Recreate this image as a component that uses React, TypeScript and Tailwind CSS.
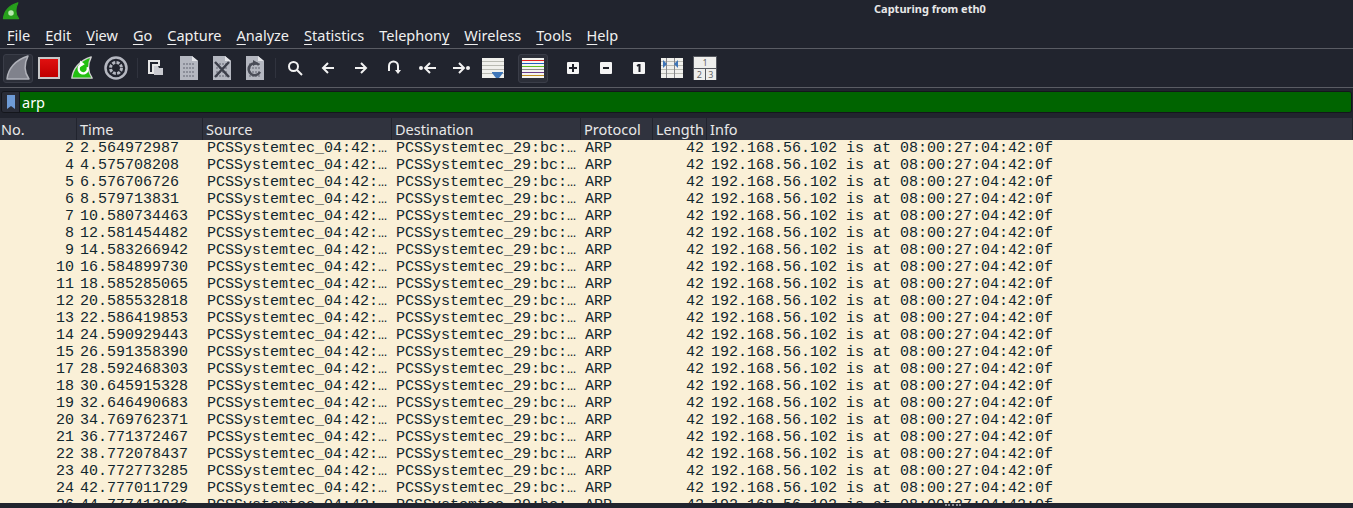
import React from 'react';

const menus: [string, string, string][] = [
  ['', 'F', 'ile'],
  ['', 'E', 'dit'],
  ['', 'V', 'iew'],
  ['', 'G', 'o'],
  ['', 'C', 'apture'],
  ['', 'A', 'nalyze'],
  ['', 'S', 'tatistics'],
  ['Telephon', 'y', ''],
  ['', 'W', 'ireless'],
  ['', 'T', 'ools'],
  ['', 'H', 'elp'],
];

const packets: [number, string][] = [
  [2, '2.564972987'],
  [4, '4.575708208'],
  [5, '6.576706726'],
  [6, '8.579713831'],
  [7, '10.580734463'],
  [8, '12.581454482'],
  [9, '14.583266942'],
  [10, '16.584899730'],
  [11, '18.585285065'],
  [12, '20.585532818'],
  [13, '22.586419853'],
  [14, '24.590929443'],
  [15, '26.591358390'],
  [17, '28.592468303'],
  [18, '30.645915328'],
  [19, '32.646490683'],
  [20, '34.769762371'],
  [21, '36.771372467'],
  [22, '38.772078437'],
  [23, '40.772773285'],
  [24, '42.777011729'],
  [26, '44.777413936'],
];

const columns = ['No.', 'Time', 'Source', 'Destination', 'Protocol', 'Length', 'Info'];

function Fin({ fill, stroke }: { fill: string; stroke: string }) {
  return <path d="M2 24 C3 14 10 5 23 1 C19 9 19 17 24 24 Z" fill={fill} stroke={stroke} strokeWidth="1.5" strokeLinejoin="round" />;
}

function Page({ children }: { children?: React.ReactNode }) {
  return (
    <svg width="20" height="26" viewBox="0 0 20 26">
      <path d="M1 1 H13 L19 6 V25 H1 Z" fill="#b4b7c0" />
      <path d="M13 1 L19 6 H13 Z" fill="#e3e4e8" />
      <path d="M4 9 H16 M4 13 H16 M4 17 H16 M4 21 H16" stroke="#8b8e99" strokeWidth="2" strokeDasharray="2 1" />
      {children}
    </svg>
  );
}

function Arrow({ dir }: { dir: 'left' | 'right' }) {
  return (
    <svg width="14" height="14" viewBox="0 0 14 14" fill="none" stroke="#f2f2f2" strokeWidth="2">
      {dir === 'left' ? <path d="M13 7 H2 M7 2 L2 7 L7 12" /> : <path d="M1 7 H12 M7 2 L12 7 L7 12" />}
    </svg>
  );
}

function Lines({ children }: { children?: React.ReactNode }) {
  return (
    <svg width="22" height="20" viewBox="0 0 22 20">
      <rect width="22" height="20" fill="#f0f0ec" />
      <path d="M0 3.5 H22 M0 7.5 H22 M0 11.5 H22 M0 15.5 H22" stroke="#b9bab2" strokeWidth="1" />
      {children}
    </svg>
  );
}

function Zoom({ sign }: { sign: string }) {
  return (
    <div className="w-3 h-3 bg-[#f4f4f4] rounded-[1px] flex items-center justify-center">
      <svg width="8" height="8" viewBox="0 0 8 8" stroke="#1d1f27" strokeWidth="2" fill="none">
        {sign === '+' && <path d="M0 4 H8 M4 0 V8" />}
        {sign === '-' && <path d="M1 4 H7" />}
        {sign === '1' && <path d="M2 2 L4.5 0.5 V8" />}
      </svg>
    </div>
  );
}

function Sep() {
  return <div className="w-px h-5 bg-[#30333e]" />;
}

export default function App() {
  return (
    <div className="h-[508px] w-[1353px] overflow-hidden bg-[#21242e] flex flex-col font-['Noto_Sans',sans-serif] text-[#f0f0f0]">
      {/* Title bar */}
      <div className="h-[24px] shrink-0 relative flex items-start pt-[2px] pl-[2px]">
        <svg width="18" height="18" viewBox="0 0 26 26">
          <Fin fill="#27a01c" stroke="#27a01c" />
          <circle cx="13" cy="16" r="4" fill="#b8e8b0" />
        </svg>
        <span className="absolute left-[874px] top-[1px] text-[11px] font-bold text-[#e8e8e8]">Capturing from eth0</span>
      </div>

      {/* Menu */}
      <div className="h-[25px] shrink-0 flex items-center pl-[7px] gap-[15px] text-[14.5px] border-b border-[#5a5c64]">
        {menus.map(([before, key, after]) => (
          <span key={before + key + after}>
            {before}
            <u className="underline-offset-[3px]">{key}</u>
            {after}
          </span>
        ))}
      </div>

      {/* Toolbar */}
      <div className="h-[39px] shrink-0 flex items-center pl-[2px] border-b border-[#5a5c64]">
        <div className="w-[30px] h-[29px] ml-[1px] flex items-center justify-center rounded-[3px] bg-[#2c2f39] border border-[#3a3d48]">
          <svg width="26" height="26" viewBox="0 0 26 26">
            <Fin fill="#80828c" stroke="#b0b2ba" />
          </svg>
        </div>
        <div className="ml-[5px] w-[22px] h-[22px] border-2 border-[#c8c8c8] bg-gradient-to-b from-[#e01010] to-[#c00000]" />
        <svg className="ml-[10px]" width="24" height="26" viewBox="0 0 26 26">
          <Fin fill="#22c010" stroke="#d0d0d0" />
          <path d="M19 12 A5 5 0 1 1 13 9" fill="none" stroke="#fff" strokeWidth="2.5" />
          <path d="M11 5 L16 9 L11 12 Z" fill="#fff" />
        </svg>
        <svg className="ml-[10px]" width="24" height="24" viewBox="0 0 24 24" fill="none">
          <circle cx="12" cy="12" r="10.5" stroke="#b4b7c0" strokeWidth="2.5" />
          <circle cx="12" cy="12" r="5.5" stroke="#b4b7c0" strokeWidth="3" strokeDasharray="3 1.3" />
        </svg>
        <div className="ml-[9px] mr-[10px]">
          <Sep />
        </div>
        <svg width="16" height="16" viewBox="0 0 16 16">
          <path d="M1 1 H11 V5 H5 V13 H1 Z" fill="none" stroke="#e6e6e6" strokeWidth="2" />
          <path d="M6 6 H10 L11 8 H15 V15 H6 Z" fill="#c9cad0" />
        </svg>
        <div className="ml-[15px]">
          <Page />
        </div>
        <div className="ml-[13px]">
          <Page>
            <path d="M3 7 L17 22 M17 7 L3 22" stroke="#3c3f4a" strokeWidth="2.5" />
          </Page>
        </div>
        <div className="ml-[13px]">
          <Page>
            <path d="M14 10 A6 6 0 1 0 15 17" fill="none" stroke="#4a4d58" strokeWidth="2.5" />
            <path d="M8 5 L13 8 L8 11 Z" fill="#4a4d58" />
          </Page>
        </div>
        <div className="ml-[10px] mr-[11px]">
          <Sep />
        </div>
        <svg width="16" height="16" viewBox="0 0 16 16" fill="none" stroke="#f2f2f2" strokeWidth="2">
          <circle cx="6.5" cy="6.5" r="4.5" />
          <path d="M10 10 L15 15" />
        </svg>
        <div className="ml-[18px]">
          <Arrow dir="left" />
        </div>
        <div className="ml-[19px]">
          <Arrow dir="right" />
        </div>
        <svg className="ml-[19px]" width="14" height="16" viewBox="0 0 14 16" fill="none">
          <path d="M2 11 V6 A4.5 4.5 0 0 1 11 6 V10" stroke="#f2f2f2" strokeWidth="2" />
          <path d="M8 10 H14 L11 14 Z" fill="#f2f2f2" />
        </svg>
        <svg className="ml-[18px]" width="18" height="14" viewBox="0 0 18 14" fill="none">
          <circle cx="2" cy="7" r="2" fill="#f2f2f2" />
          <path d="M17 7 H6 M11 2 L6 7 L11 12" stroke="#f2f2f2" strokeWidth="2" />
        </svg>
        <svg className="ml-[15px]" width="18" height="14" viewBox="0 0 18 14" fill="none">
          <circle cx="16" cy="7" r="2" fill="#f2f2f2" />
          <path d="M1 7 H12 M7 2 L12 7 L7 12" stroke="#f2f2f2" strokeWidth="2" />
        </svg>
        <div className="ml-[12px]">
          <Lines>
            <path d="M10 14 H21 V15 L17 20 H14 L10 15 Z" fill="#3f76b8" />
          </Lines>
        </div>
        <div className="ml-[14px] w-[30px] h-[29px] flex items-center justify-center rounded-[3px] bg-[#2c2f39] border border-[#3a3d48]">
          <svg width="22" height="20" viewBox="0 0 22 20">
            <rect width="22" height="20" fill="#f4f4f0" />
            <path d="M0 2.5 H22" stroke="#e02020" />
            <path d="M0 5.5 H22" stroke="#2060c0" />
            <path d="M0 8.5 H22" stroke="#60c020" />
            <path d="M0 11.5 H22" stroke="#8a8a8a" />
            <path d="M0 14.5 H22" stroke="#6a3c8a" />
            <path d="M0 17.5 H22" stroke="#c09020" />
          </svg>
        </div>
        <div className="ml-[19px]">
          <Zoom sign="+" />
        </div>
        <div className="ml-[21px]">
          <Zoom sign="-" />
        </div>
        <div className="ml-[21px]">
          <Zoom sign="1" />
        </div>
        <div className="ml-[16px]">
          <Lines>
            <path d="M5.5 0 V20 M13.5 0 V20" stroke="#85868a" strokeWidth="1" />
            <path d="M2 2 L6 6 L2 10 Z M17 2 L13 6 L17 10 Z" fill="#3f76b8" />
          </Lines>
        </div>
        <div className="ml-[10px] w-[24px] h-[24px] border border-[#55585f] bg-[#55585f] grid grid-cols-2 gap-[1px] text-[9px] leading-[11px] text-[#666] font-['Noto_Sans',sans-serif]">
          <div className="col-span-2 bg-[#eeeeec] text-center">1</div>
          <div className="bg-[#eeeeec] text-center">2</div>
          <div className="bg-[#eeeeec] text-center">3</div>
        </div>
      </div>

      {/* Display filter */}
      <div className="mt-[3px] mx-[1px] h-[22px] flex rounded-[3px] border border-[#14161c] overflow-hidden shrink-0">
        <div className="w-[18px] bg-[#2a2d38] flex items-center justify-center border-r border-[#14161c]">
          <svg width="8" height="14" viewBox="0 0 8 14">
            <path d="M0 0 H8 V14 L4 11 L0 14 Z" fill="#6e9bd6" />
          </svg>
        </div>
        <div className="flex-1 bg-[#006400] pl-[2px] text-[14.5px] leading-[20px] text-white">arp</div>
      </div>

      {/* Packet list header */}
      <div className="mt-[5px] h-[22px] shrink-0 grid grid-cols-[77px_126px_189px_189px_72px_54px_1fr] bg-[#30333e] text-[14.5px] leading-[22px] text-[#e8e8e8]">
        {columns.map((c, i) => (
          <div key={c} className={i === 0 ? 'pl-[1px] border-r border-[#21242e]' : 'pl-[3px] border-r border-[#21242e] whitespace-nowrap overflow-hidden'}>
            {c}
          </div>
        ))}
      </div>

      {/* Packets */}
      <div className="flex-1 min-h-0 overflow-hidden bg-[#faf0d7] text-[#12272e] font-['Liberation_Mono',monospace] text-[15px] leading-[17px]">
        {packets.map(([no, time]) => (
          <div key={no} className="h-[17px] grid grid-cols-[77px_126px_189px_189px_72px_54px_1fr] whitespace-pre">
            <div className="text-right pr-[3px]">{no}</div>
            <div className="pl-[3px]">{time}</div>
            <div className="pl-[4px]">PCSSystemtec_04:42:…</div>
            <div className="pl-[4px]">PCSSystemtec_29:bc:…</div>
            <div className="pl-[4px]">ARP</div>
            <div className="text-right pr-[3px]">42</div>
            <div className="pl-[4px]">192.168.56.102 is at 08:00:27:04:42:0f</div>
          </div>
        ))}
      </div>

      {/* Splitter */}
      <div className="h-[5px] shrink-0 flex items-center pl-[945px]">
        <div className="w-[16px] h-[2px] border-t-2 border-dotted border-[#8a8c94] mb-[2px]" />
      </div>
    </div>
  );
}
